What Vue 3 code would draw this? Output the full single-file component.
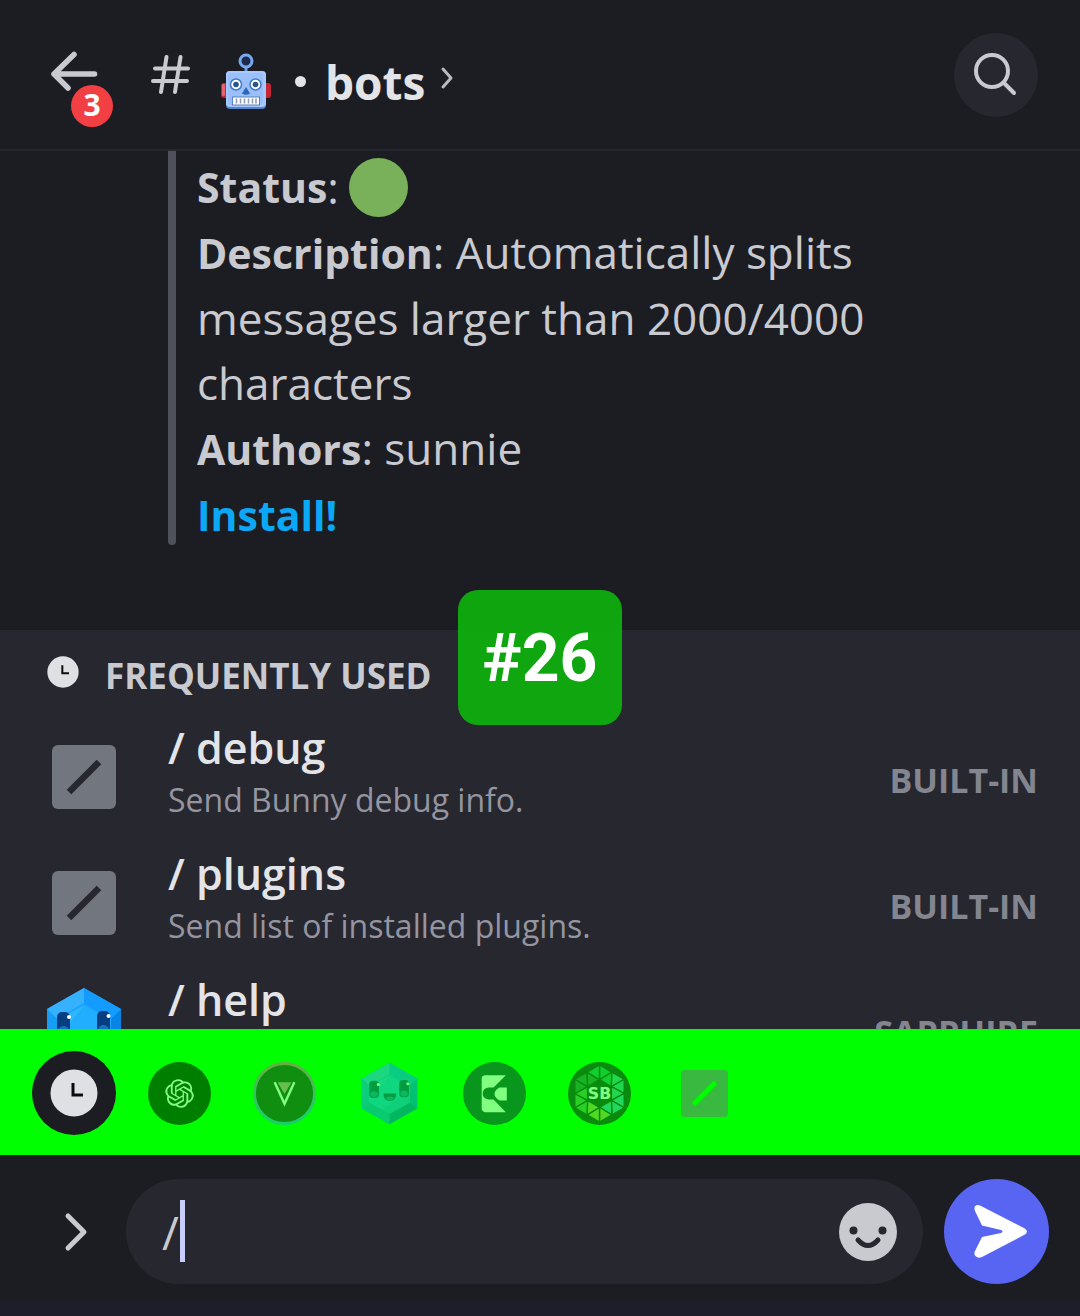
<script setup>
import { ref } from 'vue'

const message = ref('/')

const commands = [
  { name: 'debug', description: 'Send Bunny debug info.', source: 'BUILT-IN', icon: 'slash' },
  { name: 'plugins', description: 'Send list of installed plugins.', source: 'BUILT-IN', icon: 'slash' },
  { name: 'help', description: '', source: 'SAPPHIRE', icon: 'sapphire' },
]

// Ring of triangles around the SB monogram, three per hexagon side
const ringColors = ['#20a060', '#40b0a0', '#40b4b8', '#a0b440', '#50a048', '#306848']
const ring = []
for (let k = 0; k < 6; k++) {
  const at = (r, i) => {
    const angle = ((i * 60 - 90) * Math.PI) / 180
    return [32 + r * Math.cos(angle), 32 + r * Math.sin(angle)]
  }
  const A = at(29, k)
  const B = at(29, k + 1)
  const a = at(14, k)
  const b = at(14, k + 1)
  const M = [(A[0] + B[0]) / 2, (A[1] + B[1]) / 2]
  const tri = (...p) => p.map((v) => v.map((n) => n.toFixed(1)).join(',')).join(' ')
  ring.push({ points: tri(A, a, M), fill: ringColors[k] })
  ring.push({ points: tri(a, b, M), fill: ringColors[k] })
  ring.push({ points: tri(B, b, M), fill: ringColors[(k + 1) % 6] })
}
</script>

<template>
  <div class="app">
    <svg class="defs" aria-hidden="true">
      <symbol id="clock" viewBox="0 0 48 48">
        <circle cx="24" cy="24" r="23.500" fill="#dfe0e3" />
        <path d="M23 14v12h10" fill="none" stroke="#0c0c0e" stroke-width="3" />
      </symbol>
      <symbol id="slash" viewBox="0 0 64 64">
        <rect width="64" height="64" rx="6" fill="#72767f" />
        <path d="M17 47L47 17" stroke="#27272f" stroke-width="6.500" />
      </symbol>
      <symbol id="sapphire" viewBox="0 0 84 84">
        <path d="M42 1L79 22V62L42 83L5 62V22z" fill="#18a0fa" />
        <path d="M42 1L5 22l10 10l27-16z" fill="#35b1ff" />
        <path d="M42 1l37 21l-10 10l-27-16z" fill="#139bff" />
        <path d="M5 22l10 10v22L5 62z" fill="#169df5" />
        <path d="M79 22L69 32v22l10 8z" fill="#0784e4" />
        <path d="M5 62l10-8l27 15v14z" fill="#1098e0" />
        <path d="M79 62l-10-8l-27 15v14z" fill="#0570c0" />
        <path d="M42 18L69 33v21L42 69L15 54V33z" fill="#22aeff" />
        <path d="M42 18L15 33v21z" fill="#30b5ff" />
        <path d="M69 38v16L42 69l-10-6z" fill="#1aa2f2" />
        <rect x="15" y="25" width="13" height="23" rx="5" fill="#063e82" />
        <rect x="55" y="24" width="13" height="23" rx="5" fill="#063e82" />
        <ellipse cx="21.500" cy="43" rx="5" ry="4" fill="#1373bd" />
        <ellipse cx="61.500" cy="42" rx="5" ry="4" fill="#1373bd" />
        <circle cx="27" cy="30" r="2" fill="#fff" />
        <circle cx="66.500" cy="29" r="2" fill="#fff" />
        <path d="M34 42h17q0 10-8.500 10T34 42z" fill="#063e82" />
        <path d="M36 48q6-4 13 0q-6 6-13 0z" fill="#1373bd" />
      </symbol>
    </svg>

    <header class="top">
      <button class="back" type="button" aria-label="Back">
        <svg width="64" height="80" viewBox="0 0 64 80" fill="none" stroke="#c9cad0" stroke-width="5.500" stroke-linecap="round">
          <path d="M45.500 39H5M25 19.500L5 39L19 53" stroke-linejoin="round" />
        </svg>
        <span class="unread">3</span>
      </button>
      <svg class="hash" width="40" height="40" viewBox="0 0 40 40" fill="none" stroke="#c9cad0" stroke-width="4" stroke-linecap="round" aria-hidden="true">
        <path d="M4 13.500h33M2 26h34M15.500 2L10 37M29.500 2L24 37" />
      </svg>
      <h1 class="channel">
        <svg class="robot" width="52" height="58" viewBox="0 0 52 58" role="img" aria-label="robot">
          <path d="M25 14v7" stroke="#6d9de8" stroke-width="3" />
          <circle cx="25" cy="8" r="6" fill="#1c2a4c" stroke="#78a8ef" stroke-width="3" />
          <rect x="0" y="30" width="50" height="15" rx="3" fill="#c52536" />
          <rect x="1" y="31" width="3" height="12" rx="1" fill="#e86370" />
          <rect x="5" y="18" width="40" height="38" rx="4" fill="#5583cf" />
          <rect x="5" y="18" width="40" height="36" rx="4" fill="#a8c9ff" />
          <rect x="7" y="20" width="35" height="32" rx="3" fill="#9abffb" />
          <g fill="#fff" stroke="#4479c4" stroke-width="1.500"><circle cx="15" cy="31.500" r="5.500" /><circle cx="34.500" cy="31.500" r="5.500" /></g>
          <g fill="#29558f"><circle cx="15" cy="31.500" r="2.800" /><circle cx="34.500" cy="31.500" r="2.800" /></g>
          <path d="M25 34l4 6.500q-4 2.500-8 0z" fill="#2868bf" />
          <rect x="11.500" y="44" width="27" height="8" fill="#fff" stroke="#5c83bb" />
          <path d="M15.500 45.500v5M19.500 45.500v5M23.500 45.500v5M27.500 45.500v5M31.500 45.500v5M35 45.500v5" stroke="#8f9eb3" stroke-width="1.600" />
        </svg>
        <span class="dot" aria-hidden="true"></span>
        <span>bots</span>
      </h1>
      <svg class="more" width="14" height="24" viewBox="0 0 14 24" fill="none" stroke="#b9bac1" stroke-width="3" stroke-linecap="round" stroke-linejoin="round" aria-hidden="true">
        <path d="M3 3l8 9l-8 9" />
      </svg>
      <button class="search" type="button" aria-label="Search">
        <svg width="84" height="84" viewBox="0 0 84 84" fill="none" stroke="#c9cad0" stroke-width="4" stroke-linecap="round">
          <circle cx="38" cy="38" r="16" />
          <path d="M50 50l10 10" />
        </svg>
      </button>
    </header>

    <main class="chat">
      <div class="quote">
        <span class="bar"></span>
        <blockquote>
          <p><b>Status</b>: <span class="online" role="img" aria-label="online"></span></p>
          <p><b>Description</b>: Automatically splits messages larger than 2000/4000 characters</p>
          <p><b>Authors</b>: sunnie</p>
          <p><a href="#install">Install!</a></p>
        </blockquote>
      </div>
    </main>

    <section class="commands">
      <h2 class="heading">
        <svg width="32" height="32" aria-hidden="true"><use href="#clock" /></svg>
        <span>FREQUENTLY USED</span>
      </h2>
      <ul class="list">
        <li v-for="c in commands" :key="c.name" class="command">
          <span class="picture">
            <svg v-if="c.icon === 'slash'" width="64" height="64" aria-hidden="true"><use href="#slash" /></svg>
            <svg v-else width="84" height="84" aria-hidden="true"><use href="#sapphire" /></svg>
          </span>
          <span class="label">
            <span class="name">/ {{ c.name }}</span>
            <span class="info">{{ c.description }}</span>
          </span>
          <span class="source">{{ c.source }}</span>
        </li>
      </ul>
      <div class="counter">#26</div>
    </section>

    <nav class="tabs" aria-label="Command sources">
      <button class="tab active" type="button" aria-label="Frequently used">
        <svg width="48" height="48"><use href="#clock" /></svg>
      </button>
      <button class="tab" type="button" aria-label="ChatGPT">
        <svg width="63" height="63" viewBox="0 0 64 64">
          <circle cx="32" cy="32" r="32" fill="#000" />
          <path transform="translate(17.500 17.500) scale(1.210)" fill="#fff" d="M22.2819 9.8211a5.9847 5.9847 0 0 0-.5157-4.9108 6.0462 6.0462 0 0 0-6.5098-2.9A6.0651 6.0651 0 0 0 4.9807 4.1818a5.9847 5.9847 0 0 0-3.9977 2.9 6.0462 6.0462 0 0 0 .7427 7.0966 5.98 5.98 0 0 0 .511 4.9107 6.051 6.051 0 0 0 6.5146 2.9001A5.9847 5.9847 0 0 0 13.2599 24a6.0557 6.0557 0 0 0 5.7718-4.2058 5.9894 5.9894 0 0 0 3.9977-2.9001 6.0557 6.0557 0 0 0-.7475-7.0729zm-9.022 12.6081a4.4755 4.4755 0 0 1-2.8764-1.0408l.1419-.0804 4.7783-2.7582a.7948.7948 0 0 0 .3927-.6813v-6.7369l2.02 1.1686a.071.071 0 0 1 .038.052v5.5826a4.504 4.504 0 0 1-4.4945 4.4944zm-9.6607-4.1254a4.4708 4.4708 0 0 1-.5346-3.0137l.142.0852 4.783 2.7582a.7712.7712 0 0 0 .7806 0l5.8428-3.3685v2.3324a.0804.0804 0 0 1-.0332.0615L9.74 19.9502a4.4992 4.4992 0 0 1-6.1408-1.6464zM2.3408 7.8956a4.485 4.485 0 0 1 2.3655-1.9728V11.6a.7664.7664 0 0 0 .3879.6765l5.8144 3.3543-2.0201 1.1685a.0757.0757 0 0 1-.071 0l-4.8303-2.7865A4.504 4.504 0 0 1 2.3408 7.872zm16.5963 3.8558L13.1038 8.364 15.1192 7.2a.0757.0757 0 0 1 .071 0l4.8303 2.7913a4.4944 4.4944 0 0 1-.6765 8.1042v-5.6772a.79.79 0 0 0-.407-.667zm2.0107-3.0231l-.142-.0852-4.7735-2.7818a.7759.7759 0 0 0-.7854 0L9.409 9.2297V6.8974a.0662.0662 0 0 1 .0284-.0615l4.8303-2.7866a4.4992 4.4992 0 0 1 6.6802 4.66zM8.3065 12.863l-2.02-1.1638a.0804.0804 0 0 1-.038-.0567V6.0742a4.4992 4.4992 0 0 1 7.3757-3.4537l-.142.0805L8.704 5.459a.7948.7948 0 0 0-.3927.6813zm1.0976-2.3654l2.602-1.4998 2.6069 1.4998v2.9994l-2.5974 1.4997-2.6067-1.4997Z" />
        </svg>
      </button>
      <button class="tab" type="button" aria-label="Vendetta">
        <svg width="63" height="63" viewBox="0 0 64 64">
          <defs>
            <linearGradient id="rim" x1="0" y1="0" x2="0" y2="1"><stop offset="0" stop-color="#d06080" /><stop offset=".5" stop-color="#688cb8" /><stop offset="1" stop-color="#30a0d8" /></linearGradient>
          </defs>
          <circle cx="32" cy="32" r="30.500" fill="#202020" stroke="url(#rim)" stroke-width="3" />
          <path d="M25 20.500h14l-7 12z" fill="#d0809c" />
          <path d="M22 20.500L32 42.500L42 20.500" fill="none" stroke="#fff" stroke-width="2.500" />
        </svg>
      </button>
      <button class="tab" type="button" aria-label="Sapphire">
        <svg width="63" height="63"><use href="#sapphire" /></svg>
      </button>
      <button class="tab" type="button" aria-label="Carl">
        <svg width="63" height="63" viewBox="0 0 64 64">
          <circle cx="32" cy="32" r="32" fill="#103038" />
          <g fill="#fff">
            <path d="M22 13.500H43.500L31 26H26Q20 27 20 32T26 38H31L43.500 51H22Q19 50 19 47V17Q19 14 22 13.500z" />
            <path d="M44.500 26v13H37q-5-3-5-6.500T37 26z" />
          </g>
        </svg>
      </button>
      <button class="tab" type="button" aria-label="SB">
        <svg width="63" height="63" viewBox="0 0 64 64">
          <circle cx="32" cy="32" r="32" fill="#141a1c" />
          <polygon v-for="t in ring" :key="t.points" :points="t.points" :fill="t.fill" stroke="#141a1c" stroke-width="1.400" />
          <text x="32" y="38" text-anchor="middle" class="monogram">SB</text>
        </svg>
      </button>
      <button class="tab" type="button" aria-label="Built-in">
        <svg width="47" height="47" viewBox="0 0 48 48">
          <path fill-rule="evenodd" fill="#727680" d="M4 0h40q4 0 4 4v40q0 4-4 4H4q-4 0-4-4V4q0-4 4-4zM33.500 11L11 33.500l3.500 3.500L37 14.500z" />
        </svg>
      </button>
    </nav>

    <form class="composer" @submit.prevent>
      <button class="expand" type="button" aria-label="More actions">
        <svg width="26" height="42" viewBox="0 0 26 42" fill="none" stroke="#c9cad0" stroke-width="5" stroke-linecap="round" stroke-linejoin="round">
          <path d="M5 5l16 16L5 37" />
        </svg>
      </button>
      <div class="field">
        <input v-model="message" type="text" aria-label="Message" />
        <span class="caret" aria-hidden="true"></span>
        <button class="emoji" type="button" aria-label="Emoji">
          <svg width="58" height="58" viewBox="0 0 58 58">
            <circle cx="29" cy="29" r="29" fill="#c9cad0" />
            <circle cx="14.500" cy="27.500" r="4" fill="#27272f" />
            <circle cx="43.500" cy="27.500" r="4" fill="#27272f" />
            <path d="M19 37q10 11 20 0" fill="none" stroke="#27272f" stroke-width="5" stroke-linecap="round" />
          </svg>
        </button>
      </div>
      <button class="send" type="submit" aria-label="Send">
        <svg width="105" height="105" viewBox="0 0 105 105">
          <path d="M38 46.500L31 32Q29 26.500 34 26Q36 26 38 27.500L80 49Q83 50.500 83 52.500T80 56L38 78Q34 80 31.500 77Q29.500 75 31 72L38 58L57 54Q60 52.500 57 51z" fill="#fff" />
        </svg>
      </button>
    </form>
    <div class="gesture"></div>
  </div>
</template>

<style>
body {
  margin: 0;
  background: #1c1d22;
}
</style>

<style scoped>
.app {
  display: flex;
  flex-direction: column;
  height: 100vh;
  overflow: hidden;
  background: #1c1d22;
  color: #c9cad0;
  font-family: "Open Sans", "Noto Sans", sans-serif;
}
.defs {
  position: absolute;
  width: 0;
  height: 0;
}
button {
  padding: 0;
  border: 0;
  background: none;
  color: inherit;
  font: inherit;
}
svg {
  display: block;
  flex: none;
}
h1, h2, p, ul, blockquote {
  margin: 0;
  padding: 0;
}

.top {
  display: flex;
  align-items: center;
  flex: none;
  height: 149px;
  padding: 0 42px 0 49px;
  border-bottom: 2px solid #27272f;
}
.back {
  position: relative;
  width: 64px;
  height: 80px;
}
.unread {
  position: absolute;
  left: 22px;
  top: 50px;
  width: 42px;
  height: 42px;
  border-radius: 50%;
  background: #f23f43;
  color: #fff;
  font-size: 30px;
  font-weight: 700;
  line-height: 40px;
  text-align: center;
}
.hash {
  margin-left: 38px;
}
.channel {
  display: flex;
  align-items: center;
  margin-left: 30px;
  padding-top: 14px;
  color: #e3e4e8;
  font-size: 46px;
  font-weight: 700;
  line-height: 60px;
}
.dot {
  width: 11px;
  height: 11px;
  margin: 0 19px 0 22px;
  border-radius: 50%;
  background: #e3e4e8;
}
.more {
  margin: 6px 0 0 15px;
}
.search {
  margin-left: auto;
  border-radius: 50%;
  background: #27272f;
}

.chat {
  display: flex;
  flex: 1;
  flex-direction: column;
  justify-content: flex-end;
  min-height: 0;
  padding: 0 168px 85px;
  overflow: hidden;
}
.quote {
  display: flex;
  gap: 21px;
  font-size: 44px;
  line-height: 65px;
}
.bar {
  flex: none;
  width: 8px;
  border-radius: 0 0 4px 4px;
  background: #4e505b;
}
.quote blockquote {
  padding-top: 6px;
}
.quote b,
.quote a {
  font-size: 41px;
  font-weight: 700;
}
.quote a {
  color: #0ba8f8;
  text-decoration: none;
}
.quote p:first-child {
  display: flex;
  align-items: center;
  height: 65px;
}
.quote p:last-child {
  height: 63px;
}
.online {
  width: 59px;
  height: 59px;
  margin-left: 10px;
  border-radius: 50%;
  background: #78b159;
}

.commands {
  position: relative;
  flex: none;
  height: 399px;
  background: #27272f;
}
.heading {
  display: flex;
  align-items: center;
  gap: 26px;
  height: 84px;
  padding-left: 47px;
  font-size: 35px;
  font-weight: 700;
}
.heading span {
  padding-top: 6px;
}
.list {
  height: 315px;
  overflow: hidden;
  list-style: none;
}
.command {
  display: flex;
  align-items: center;
  height: 126px;
  padding: 0 42px;
}
.picture {
  display: flex;
  justify-content: center;
  width: 84px;
}
.label {
  display: flex;
  flex: 1;
  flex-direction: column;
  margin-left: 42px;
  padding-bottom: 14px;
}
.name {
  color: #e3e4e8;
  font-size: 43px;
  font-weight: 600;
  line-height: 60px;
}
.info {
  min-height: 44px;
  color: #9495a1;
  font-size: 32px;
  line-height: 44px;
}
.source {
  padding-top: 6px;
  color: #83858f;
  font-size: 34px;
  font-weight: 700;
}
.counter {
  position: absolute;
  top: -40px;
  left: 50%;
  width: 164px;
  height: 135px;
  margin-left: -82px;
  border-radius: 20px;
  background: rgba(12, 184, 12, 0.88);
  color: #fff;
  font-family: Roboto, sans-serif;
  font-size: 66px;
  font-weight: 700;
  line-height: 138px;
  text-align: center;
}

.tabs {
  display: flex;
  flex: none;
  gap: 21px;
  height: 124px;
  align-items: center;
  padding: 2px 0 0 32px;
  background: #00ff00;
}
.tab {
  display: flex;
  align-items: center;
  justify-content: center;
  width: 84px;
  height: 84px;
  border-radius: 50%;
}
.tab svg {
  opacity: 0.5;
}
.tab.active {
  background: #1c1d22;
}
.tab.active svg {
  opacity: 1;
}
.monogram {
  fill: #fff;
  font-family: "DejaVu Sans", sans-serif;
  font-size: 16px;
  font-weight: 700;
}

.composer {
  display: flex;
  align-items: center;
  flex: none;
  height: 105px;
  padding: 24px 31px 18px 63px;
}
.expand {
  width: 26px;
}
.field {
  position: relative;
  display: flex;
  align-items: center;
  flex: 1;
  height: 105px;
  margin: 0 21px 0 37px;
  padding: 0 26px 0 36px;
  border-radius: 53px;
  background: #27272f;
  box-sizing: border-box;
}
.field input {
  flex: 1;
  min-width: 0;
  padding: 0;
  border: 0;
  outline: 0;
  background: none;
  color: #c9cad0;
  font: inherit;
  font-size: 46px;
}
.caret {
  position: absolute;
  left: 54px;
  top: 21px;
  width: 5px;
  height: 62px;
  background: #c9cdfb;
}
.send {
  border-radius: 50%;
  background: #5865f2;
}
.gesture {
  flex: none;
  height: 14px;
  background: #1e1e2a;
}
</style>
